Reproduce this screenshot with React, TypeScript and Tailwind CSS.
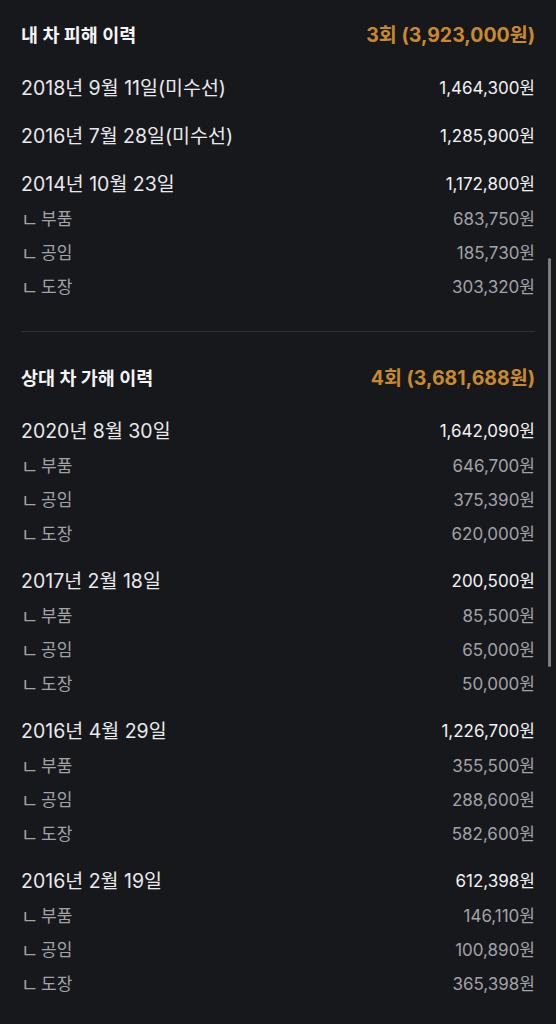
import React from 'react';

type Entry = {
  date: string;
  total: string;
  parts?: { label: string; amount: string }[];
};

type Section = {
  title: string;
  summary: string;
  entries: Entry[];
};

const sections: Section[] = [
  {
    title: '내 차 피해 이력',
    summary: '3회 (3,923,000원)',
    entries: [
      { date: '2018년 9월 11일(미수선)', total: '1,464,300원' },
      { date: '2016년 7월 28일(미수선)', total: '1,285,900원' },
      {
        date: '2014년 10월 23일',
        total: '1,172,800원',
        parts: [
          { label: '부품', amount: '683,750원' },
          { label: '공임', amount: '185,730원' },
          { label: '도장', amount: '303,320원' },
        ],
      },
    ],
  },
  {
    title: '상대 차 가해 이력',
    summary: '4회 (3,681,688원)',
    entries: [
      {
        date: '2020년 8월 30일',
        total: '1,642,090원',
        parts: [
          { label: '부품', amount: '646,700원' },
          { label: '공임', amount: '375,390원' },
          { label: '도장', amount: '620,000원' },
        ],
      },
      {
        date: '2017년 2월 18일',
        total: '200,500원',
        parts: [
          { label: '부품', amount: '85,500원' },
          { label: '공임', amount: '65,000원' },
          { label: '도장', amount: '50,000원' },
        ],
      },
      {
        date: '2016년 4월 29일',
        total: '1,226,700원',
        parts: [
          { label: '부품', amount: '355,500원' },
          { label: '공임', amount: '288,600원' },
          { label: '도장', amount: '582,600원' },
        ],
      },
      {
        date: '2016년 2월 19일',
        total: '612,398원',
        parts: [
          { label: '부품', amount: '146,110원' },
          { label: '공임', amount: '100,890원' },
          { label: '도장', amount: '365,398원' },
        ],
      },
    ],
  },
];

const HistorySection: React.FC<{ section: Section }> = ({ section }) => (
  <section className="flex flex-col">
    {/* 제목 + 합계 */}
    <div className="flex h-[26px] items-center justify-between">
      <h2 className="text-[18.5px] font-bold text-[#f4f4f5]">{section.title}</h2>
      <span className="text-[19.5px] font-bold text-[#c88a2c]">{section.summary}</span>
    </div>
    <div className="flex flex-col gap-[12px] pt-[22px]">
      {section.entries.map((entry) => (
        <div key={entry.date} className="flex flex-col">
          <div className="flex h-[36px] items-center justify-between">
            <span className="text-[19.5px] text-[#e9e9eb]">{entry.date}</span>
            <span className="text-[17px] text-[#f2f2f3]">{entry.total}</span>
          </div>
          {entry.parts?.map((part) => (
            <div key={part.label} className="flex h-[34px] items-center justify-between text-[17px] text-[#a2a2a7]">
              <span className="flex items-center">
                <span className="w-[20px] shrink-0 overflow-visible whitespace-nowrap text-[19px] leading-none">ㄴ</span>
                <span>{part.label}</span>
              </span>
              <span>{part.amount}</span>
            </div>
          ))}
        </div>
      ))}
    </div>
  </section>
);

export default function App() {
  return (
    <div
      className="relative flex min-h-screen flex-col bg-[#17181c] px-[21px] pb-[20px] pt-[23px]"
      style={{ fontFamily: "Inter, 'Noto Sans CJK KR', sans-serif" }}
    >
      <HistorySection section={sections[0]} />
      <div className="mb-[34px] mt-[26px] h-px shrink-0 bg-[#2e2f33]" />
      <HistorySection section={sections[1]} />

      {/* 스크롤바 */}
      <div className="absolute right-[5px] top-[258px] h-[409px] w-[3px] rounded-full bg-[#7c7c80]" />
    </div>
  );
}
